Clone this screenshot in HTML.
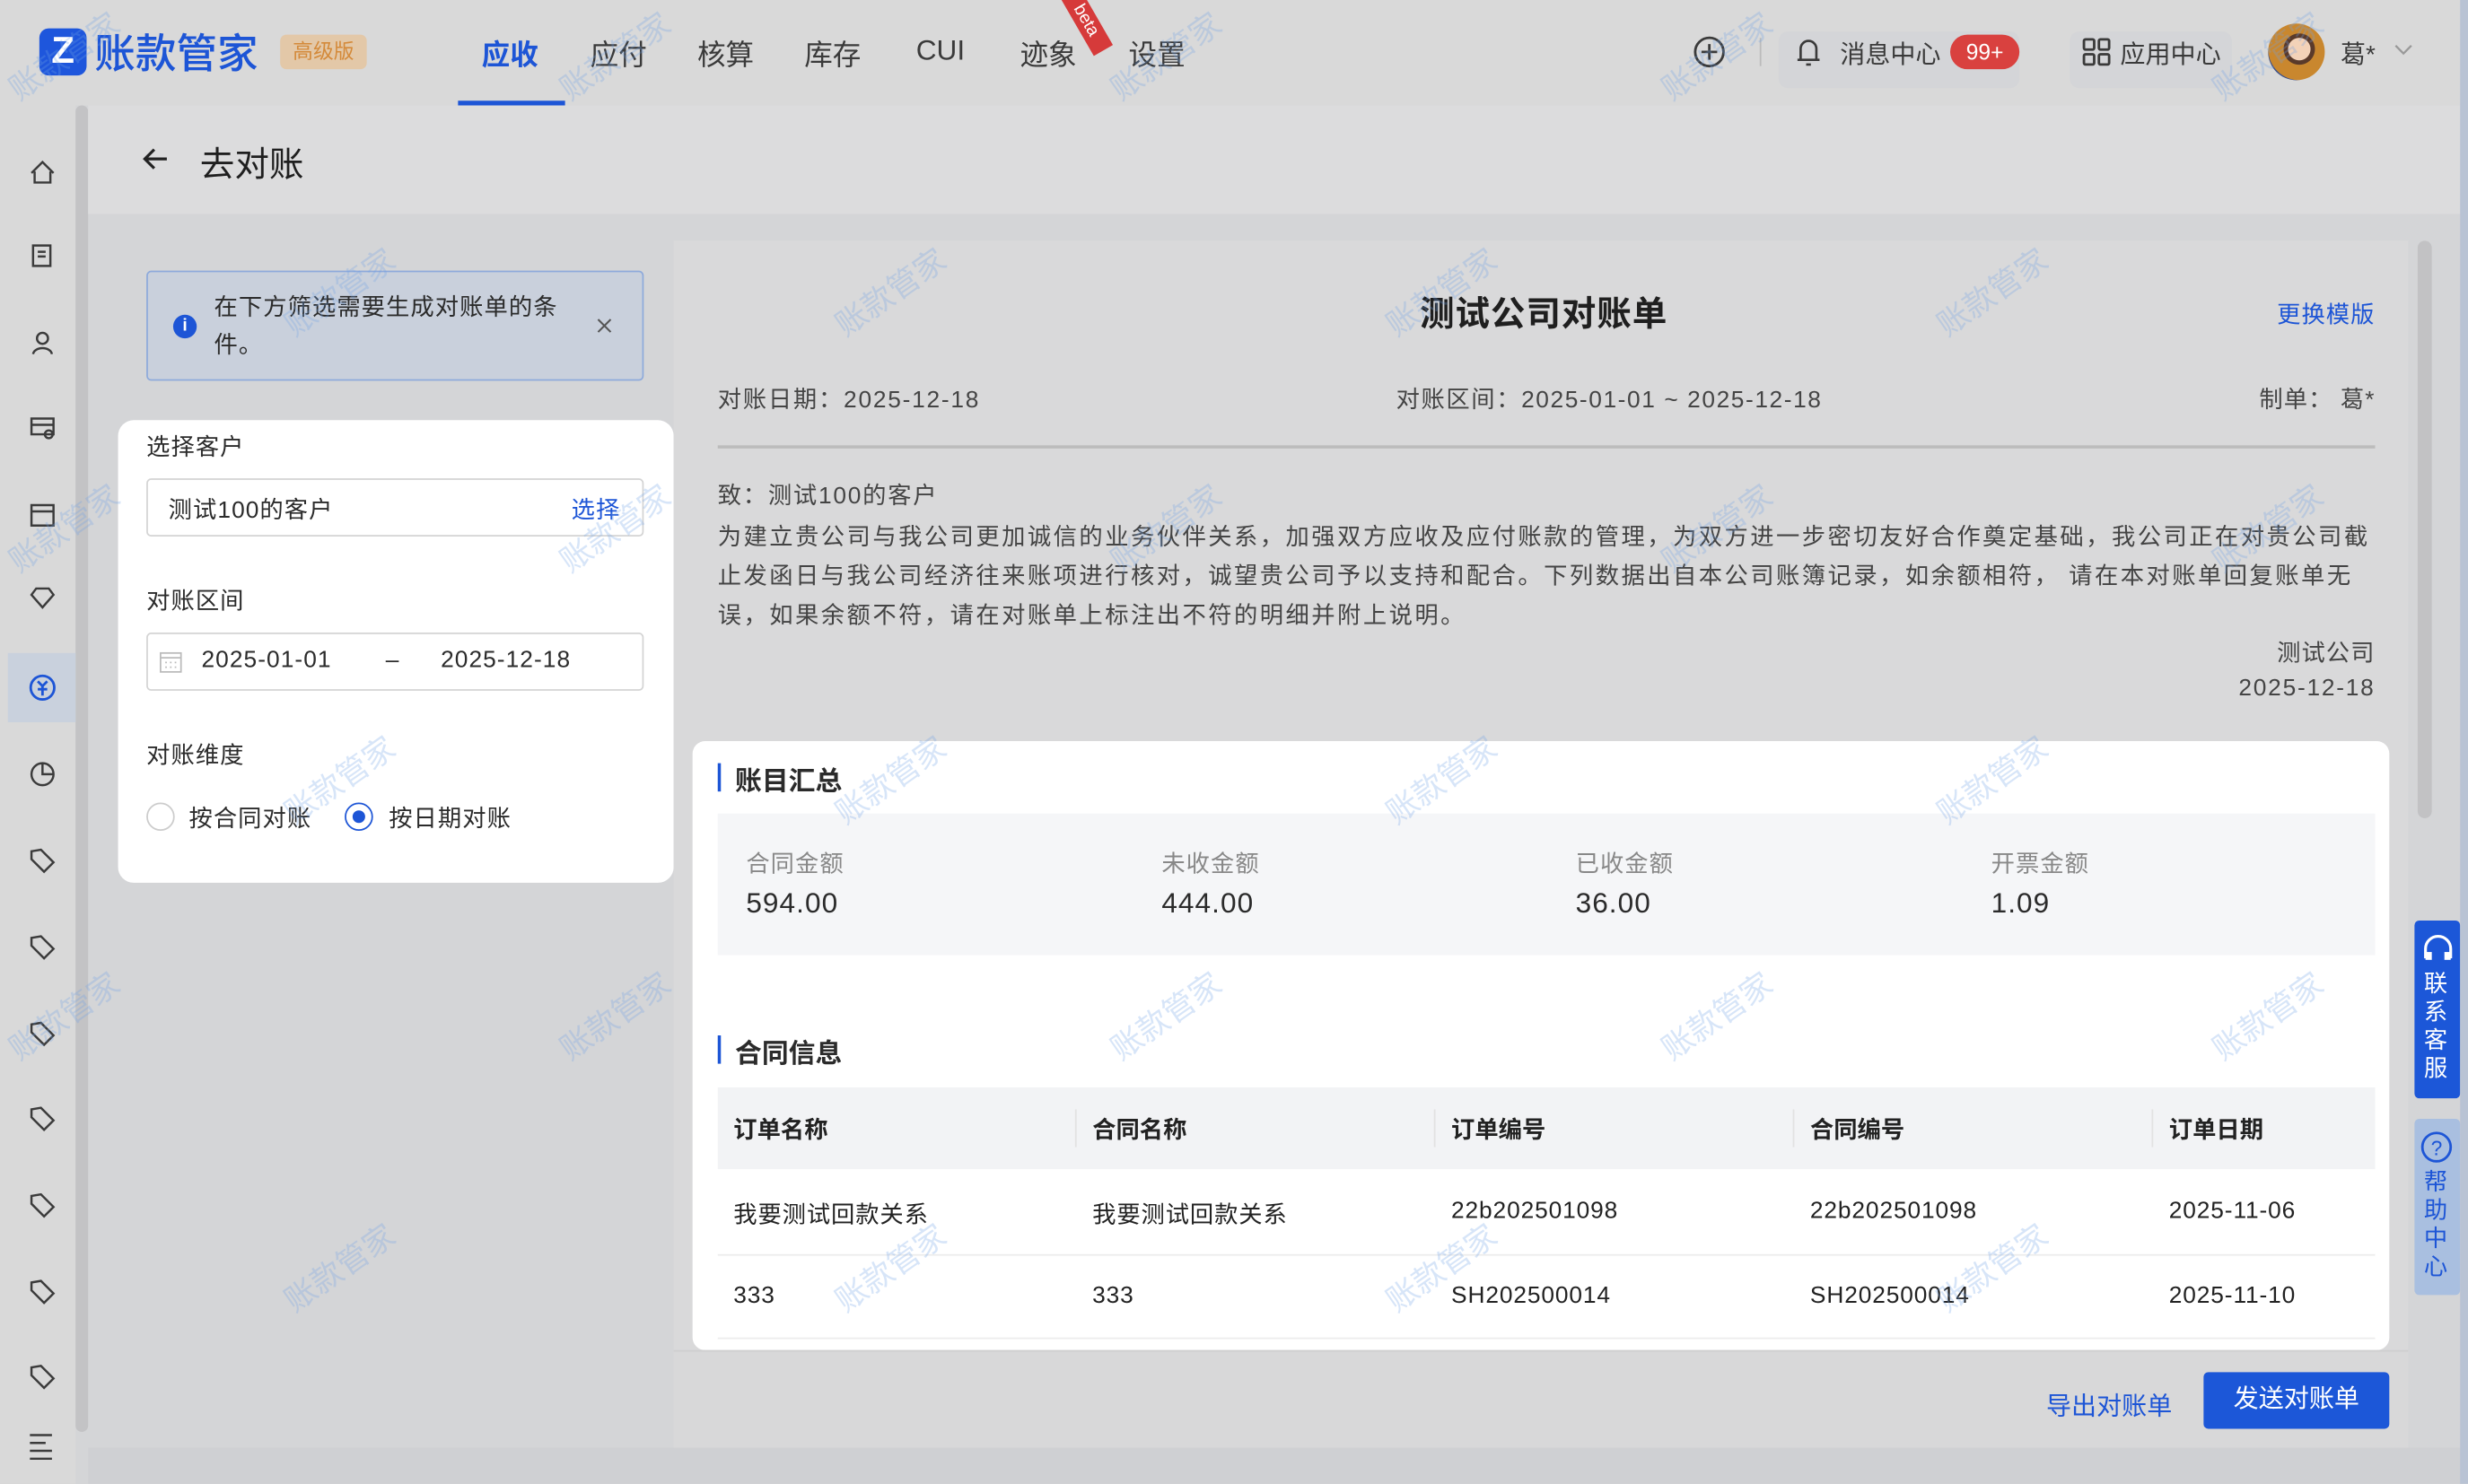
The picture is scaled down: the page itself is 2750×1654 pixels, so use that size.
<!DOCTYPE html>
<html><head><meta charset="utf-8">
<style>
*{margin:0;padding:0;box-sizing:border-box}
html,body{width:2750px;height:1654px;overflow:hidden;background:#d6d6d8}
body{font-family:"Liberation Sans","Noto Sans CJK SC",sans-serif;color:#2b2b2b}
#w{position:absolute;left:0;top:0;width:1568px;height:943px;transform:scale(1.75383);transform-origin:0 0;background:#d4d5d7;overflow:hidden}
.a{position:absolute;white-space:nowrap}
.t15{font-size:15px}
.ls{letter-spacing:0.6px}
.nav{left:0;top:0;width:1568px;height:67px;background:#d9d9d9}
.ni{font-size:18px;color:#3a3a3a;top:21px}
.side{left:0;top:67px;width:48px;height:876px;background:#d9d9d9}
svg{overflow:visible}
.wm{position:absolute;color:rgba(110,160,230,.28);font-size:20px;transform:rotate(-35deg);white-space:nowrap}
.th{font-size:15px;font-weight:bold;color:#222}
.td{font-size:15px;color:#222;letter-spacing:0.5px}
.r{text-align:right}
</style></head><body><div id="w">

<div class="a nav"></div>
<div class="a" style="left:25px;top:18px;width:30px;height:30px;background:#1e56dc;border-radius:6px;color:#fff;font:bold 24px/30px 'Liberation Sans';text-align:center">Z</div>
<div class="a" style="left:60px;top:14px;font-size:26px;color:#1d55d6;font-weight:500">账款管家</div>
<div class="a" style="left:178px;top:22px;width:55px;height:22px;background:#e3c8a8;border-radius:4px;color:#d48a3a;font-size:13px;line-height:22px;text-align:center">高级版</div>
<div class="a ni" style="left:306px;color:#1d55d6;font-weight:bold">应收</div>
<div class="a" style="left:291px;top:64px;width:68px;height:3px;background:#1d55d6"></div>
<div class="a ni" style="left:375px">应付</div>
<div class="a ni" style="left:443px">核算</div>
<div class="a ni" style="left:511px">库存</div>
<div class="a ni" style="left:582px;top:22px">CUI</div>
<div class="a ni" style="left:648px">迹象</div>
<div class="a ni" style="left:717px">设置</div>
<div class="a" style="left:668px;top:6px;width:44px;height:14px;background:#d63a3a;color:#fff;font-size:11px;line-height:14px;text-align:center;transform:rotate(60deg)">beta</div>
<svg class="a" style="left:1076px;top:23px" width="20" height="20"><circle cx="10" cy="10" r="9" fill="none" stroke="#3a3a3a" stroke-width="1.6"/><path d="M10 5v10M5 10h10" stroke="#3a3a3a" stroke-width="1.6"/></svg>
<div class="a" style="left:1118px;top:24px;width:1px;height:18px;background:#bbb"></div>
<div class="a" style="left:1130px;top:20px;width:153px;height:36px;background:#d4d5d8;border-radius:6px"></div>
<svg class="a" style="left:1141px;top:23px" width="16" height="20"><path d="M3 15V8a5 5 0 0 1 10 0v7M1 15h14M6.5 18h3" fill="none" stroke="#3a3a3a" stroke-width="1.5"/></svg>
<div class="a" style="left:1169px;top:21px;font-size:16px;color:#3a3a3a">消息中心</div>
<div class="a" style="left:1239px;top:22px;width:44px;height:22px;background:#d9413f;border-radius:11px;color:#fff;font-size:14px;line-height:22px;text-align:center">99+</div>
<div class="a" style="left:1315px;top:20px;width:103px;height:36px;background:#d4d5d8;border-radius:6px"></div>
<svg class="a" style="left:1323px;top:24px" width="18" height="18"><g fill="none" stroke="#3a3a3a" stroke-width="1.6"><rect x="1" y="1" width="6.5" height="6.5" rx="1"/><rect x="10.5" y="1" width="6.5" height="6.5" rx="1"/><rect x="1" y="10.5" width="6.5" height="6.5" rx="1"/><rect x="10.5" y="10.5" width="6.5" height="6.5" rx="1"/></g></svg>
<div class="a" style="left:1347px;top:21px;font-size:16px;color:#3a3a3a">应用中心</div>
<div class="a" style="left:1441px;top:15px;width:36px;height:36px;border-radius:50%;background:radial-gradient(circle at 55% 45%,#f3d2b8 0 25%,#5a3a2a 26% 35%,#c9872e 36% 70%,#3a4f8a 71%)"></div>
<div class="a" style="left:1487px;top:21px;font-size:16px;color:#3a3a3a">葛*</div>
<svg class="a" style="left:1521px;top:28px" width="12" height="8"><path d="M1 1l5 5 5-5" fill="none" stroke="#999" stroke-width="1.3"/></svg>

<div class="a side"></div>
<div class="a" style="left:48px;top:67px;width:8px;height:843px;background:#c3c3c5;border-radius:4px"></div>
<div class="a" style="left:5px;top:415px;width:43px;height:44px;background:#c9d1dd"></div>
<svg class="a" style="left:0;top:0" width="56" height="943"><g fill="none" stroke="#3b3b3b" stroke-width="1.4">
<path d="M20 110l7-7 7 7M22 109v7h10v-7"/>
<path d="M21 156h11v13h-11zM24 160h5M24 163h5"/>
<circle cx="27" cy="215" r="3.5"/><path d="M21 225c1-5 11-5 12 0"/>
<path d="M20 266h14v10h-14zM20 270h14"/><circle cx="31" cy="276" r="2.5"/>
<path d="M20 321h14v13h-14zM20 325h14"/>
<path d="M20 378l3-4h8l3 4-7 8z"/>
<circle cx="27" cy="492" r="7"/><path d="M27 485v7h7"/>
<path d="M20 541l6-1 8 8-6 6-8-8z"/><path d="M20 596l6-1 8 8-6 6-8-8z"/><path d="M20 651l6-1 8 8-6 6-8-8z"/><path d="M20 705l6-1 8 8-6 6-8-8z"/><path d="M20 760l6-1 8 8-6 6-8-8z"/><path d="M20 815l6-1 8 8-6 6-8-8z"/><path d="M20 869l6-1 8 8-6 6-8-8z"/>
<path d="M19 912h14M19 917h10M19 922h14M19 927h14"/>
</g><g fill="none" stroke="#1d55d6" stroke-width="1.6"><circle cx="27" cy="437" r="7.5"/><path d="M24 433l3 3 3-3M27 436v6M24 438h6"/></g></svg>

<div class="a" style="left:56px;top:67px;width:1512px;height:69px;background:#dcdcdd"></div>
<svg class="a" style="left:90px;top:93px" width="18" height="16"><path d="M16 8H2M8 2L2 8l6 6" fill="none" stroke="#222" stroke-width="1.8"/></svg>
<div class="a" style="left:127px;top:87px;font-size:22px;color:#1f1f1f">去对账</div>

<div class="a" style="left:93px;top:172px;width:316px;height:70px;background:#c9d0dc;border:1px solid #8eaadb;border-radius:3px"></div>
<div class="a" style="left:110px;top:200px;width:15px;height:15px;border-radius:50%;background:#1d55d6;color:#fff;font-size:11px;line-height:15px;text-align:center;font-weight:bold">i</div>
<div class="a t15 ls" style="left:136px;top:184px;line-height:24px;color:#2b2b2b;white-space:normal;width:235px">在下方筛选需要生成对账单的条件。</div>
<svg class="a" style="left:379px;top:202px" width="10" height="10"><path d="M1 1l8 8M9 1l-8 8" stroke="#555" stroke-width="1.2"/></svg>

<div class="a" style="left:75px;top:267px;width:353px;height:294px;background:#fff;border-radius:10px"></div>
<div class="a t15 ls" style="left:93px;top:273px">选择客户</div>
<div class="a" style="left:93px;top:304px;width:316px;height:37px;border:1px solid #d4d4d4;border-radius:3px"></div>
<div class="a t15 ls" style="left:107px;top:313px">测试100的客户</div>
<div class="a t15 ls" style="left:363px;top:313px;color:#1d55d6">选择</div>
<div class="a t15 ls" style="left:93px;top:371px">对账区间</div>
<div class="a" style="left:93px;top:402px;width:316px;height:37px;border:1px solid #d4d4d4;border-radius:3px"></div>
<svg class="a" style="left:101px;top:413px" width="15" height="15"><rect x="1" y="2" width="13" height="12" fill="none" stroke="#bbb"/><path d="M1 5h13M4 8h1M7 8h1M10 8h1M4 11h1M7 11h1M10 11h1" stroke="#bbb"/></svg>
<div class="a t15 ls" style="left:128px;top:411px">2025-01-01</div>
<div class="a t15" style="left:245px;top:411px">–</div>
<div class="a t15 ls" style="left:280px;top:411px">2025-12-18</div>
<div class="a t15 ls" style="left:93px;top:469px">对账维度</div>
<div class="a" style="left:93px;top:510px;width:18px;height:18px;border:1px solid #ccc;border-radius:50%"></div>
<div class="a t15 ls" style="left:120px;top:509px">按合同对账</div>
<div class="a" style="left:219px;top:510px;width:18px;height:18px;border:1.5px solid #1d55d6;border-radius:50%"></div>
<div class="a" style="left:224px;top:515px;width:8px;height:8px;background:#1d55d6;border-radius:50%"></div>
<div class="a t15 ls" style="left:247px;top:509px">按日期对账</div>

<div class="a" style="left:428px;top:153px;width:1102px;height:767px;background:#d9d9da"></div>
<div class="a" style="left:1536px;top:153px;width:9px;height:367px;background:#c2c2c4;border-radius:5px"></div>
<div class="a" style="left:902px;top:182px;font-size:22px;font-weight:bold;color:#1f1f1f;letter-spacing:0.5px">测试公司对账单</div>
<div class="a t15 ls r" style="left:1400px;width:109px;top:189px;color:#1d55d6">更换模版</div>
<div class="a t15" style="left:456px;top:243px;color:#444;letter-spacing:1px">对账日期：2025-12-18</div>
<div class="a t15" style="left:887px;top:243px;color:#444;letter-spacing:0.9px">对账区间：2025-01-01 ~ 2025-12-18</div>
<div class="a t15 ls r" style="left:1400px;width:109px;top:243px;color:#444">制单：&nbsp;葛*</div>
<div class="a" style="left:456px;top:283px;width:1053px;height:2px;background:#bcbcbc"></div>
<div class="a t15" style="left:456px;top:304px;color:#444;letter-spacing:1px">致：测试100的客户</div>
<div class="a t15" style="left:456px;top:329px;width:1058px;line-height:25px;color:#444;white-space:normal;letter-spacing:1.4px">为建立贵公司与我公司更加诚信的业务伙伴关系，加强双方应收及应付账款的管理，为双方进一步密切友好合作奠定基础，我公司正在对贵公司截止发函日与我公司经济往来账项进行核对，诚望贵公司予以支持和配合。下列数据出自本公司账簿记录，如余额相符， 请在本对账单回复账单无误，如果余额不符，请在对账单上标注出不符的明细并附上说明。</div>
<div class="a t15 ls r" style="left:1350px;width:159px;top:404px;color:#444">测试公司</div>
<div class="a t15 r" style="left:1350px;width:159px;top:429px;color:#444;letter-spacing:1px">2025-12-18</div>

<div class="a" style="left:440px;top:471px;width:1078px;height:387px;background:#fff;border-radius:8px"></div>
<div class="a" style="left:456px;top:485px;width:2px;height:18px;background:#1d55d6"></div>
<div class="a" style="left:467px;top:482px;font-size:17px;font-weight:bold">账目汇总</div>
<div class="a" style="left:456px;top:517px;width:1053px;height:90px;background:#f5f6f8"></div>
<div class="a t15 ls" style="left:474px;top:538px;color:#888">合同金额</div>
<div class="a t15 ls" style="left:738px;top:538px;color:#888">未收金额</div>
<div class="a t15 ls" style="left:1001px;top:538px;color:#888">已收金额</div>
<div class="a t15 ls" style="left:1265px;top:538px;color:#888">开票金额</div>
<div class="a" style="left:474px;top:564px;font-size:18px;letter-spacing:0.6px">594.00</div>
<div class="a" style="left:738px;top:564px;font-size:18px;letter-spacing:0.6px">444.00</div>
<div class="a" style="left:1001px;top:564px;font-size:18px;letter-spacing:0.6px">36.00</div>
<div class="a" style="left:1265px;top:564px;font-size:18px;letter-spacing:0.6px">1.09</div>
<div class="a" style="left:456px;top:658px;width:2px;height:18px;background:#1d55d6"></div>
<div class="a" style="left:467px;top:655px;font-size:17px;font-weight:bold">合同信息</div>
<div class="a" style="left:456px;top:691px;width:1053px;height:52px;background:#f2f3f5"></div>
<div class="a" style="left:683px;top:705px;width:1px;height:24px;background:#e2e2e2"></div>
<div class="a" style="left:911px;top:705px;width:1px;height:24px;background:#e2e2e2"></div>
<div class="a" style="left:1139px;top:705px;width:1px;height:24px;background:#e2e2e2"></div>
<div class="a" style="left:1367px;top:705px;width:1px;height:24px;background:#e2e2e2"></div>
<div class="a th" style="left:466px;top:707px">订单名称</div>
<div class="a th" style="left:694px;top:707px">合同名称</div>
<div class="a th" style="left:922px;top:707px">订单编号</div>
<div class="a th" style="left:1150px;top:707px">合同编号</div>
<div class="a th" style="left:1378px;top:707px">订单日期</div>
<div class="a td" style="left:466px;top:761px">我要测试回款关系</div>
<div class="a td" style="left:694px;top:761px">我要测试回款关系</div>
<div class="a td" style="left:922px;top:761px">22b202501098</div>
<div class="a td" style="left:1150px;top:761px">22b202501098</div>
<div class="a td" style="left:1378px;top:761px">2025-11-06</div>
<div class="a" style="left:456px;top:797px;width:1053px;height:1px;background:#ececec"></div>
<div class="a td" style="left:466px;top:815px">333</div>
<div class="a td" style="left:694px;top:815px">333</div>
<div class="a td" style="left:922px;top:815px">SH202500014</div>
<div class="a td" style="left:1150px;top:815px">SH202500014</div>
<div class="a td" style="left:1378px;top:815px">2025-11-10</div>
<div class="a" style="left:456px;top:850px;width:1053px;height:1px;background:#ececec"></div>

<div class="a" style="left:428px;top:858px;width:1102px;height:62px;background:#d8d8d9;border-top:1px solid #cfcfcf"></div>
<div class="a" style="left:1300px;top:880px;font-size:16px;color:#1d55d6">导出对账单</div>
<div class="a" style="left:1400px;top:872px;width:118px;height:36px;background:#1c57d8;border-radius:3px;color:#fff;font-size:16px;line-height:36px;text-align:center">发送对账单</div>
<div class="a" style="left:56px;top:920px;width:1512px;height:23px;background:#cfd0d3"></div>

<div class="a" style="left:1534px;top:585px;width:29px;height:113px;background:#1c57d8;border-radius:3px"></div>
<svg class="a" style="left:1539px;top:593px" width="20" height="20"><path d="M2 16V10a8 8 0 0 1 16 0v6" fill="none" stroke="#fff" stroke-width="1.8"/><rect x="2" y="12" width="4" height="5" fill="#fff"/><rect x="14" y="12" width="4" height="5" fill="#fff"/></svg>
<div class="a" style="left:1540px;top:617px;width:16px;font-size:15px;line-height:18px;color:#fff;white-space:normal">联系客服</div>
<div class="a" style="left:1534px;top:711px;width:29px;height:112px;background:#a9bfe0;border-radius:3px"></div>
<svg class="a" style="left:1538px;top:719px" width="20" height="20"><circle cx="10" cy="10" r="9" fill="none" stroke="#1d55d6" stroke-width="1.6"/><text x="10" y="15" font-size="13" text-anchor="middle" fill="#1d55d6" font-family="Liberation Sans">?</text></svg>
<div class="a" style="left:1540px;top:743px;width:16px;font-size:15px;line-height:18px;color:#1d55d6;white-space:normal">帮助中心</div>
<div class="a" style="left:1563px;top:0;width:5px;height:943px;background:#b9c3d4"></div>

<div class="wm" style="left:0;top:20px">账款管家</div><div class="wm" style="left:350px;top:20px">账款管家</div><div class="wm" style="left:700px;top:20px">账款管家</div><div class="wm" style="left:1050px;top:20px">账款管家</div><div class="wm" style="left:1400px;top:20px">账款管家</div>
<div class="wm" style="left:175px;top:170px">账款管家</div><div class="wm" style="left:525px;top:170px">账款管家</div><div class="wm" style="left:875px;top:170px">账款管家</div><div class="wm" style="left:1225px;top:170px">账款管家</div>
<div class="wm" style="left:0;top:320px">账款管家</div><div class="wm" style="left:350px;top:320px">账款管家</div><div class="wm" style="left:700px;top:320px">账款管家</div><div class="wm" style="left:1050px;top:320px">账款管家</div><div class="wm" style="left:1400px;top:320px">账款管家</div>
<div class="wm" style="left:175px;top:480px">账款管家</div><div class="wm" style="left:525px;top:480px">账款管家</div><div class="wm" style="left:875px;top:480px">账款管家</div><div class="wm" style="left:1225px;top:480px">账款管家</div>
<div class="wm" style="left:0;top:630px">账款管家</div><div class="wm" style="left:350px;top:630px">账款管家</div><div class="wm" style="left:700px;top:630px">账款管家</div><div class="wm" style="left:1050px;top:630px">账款管家</div><div class="wm" style="left:1400px;top:630px">账款管家</div>
<div class="wm" style="left:175px;top:790px">账款管家</div><div class="wm" style="left:525px;top:790px">账款管家</div><div class="wm" style="left:875px;top:790px">账款管家</div><div class="wm" style="left:1225px;top:790px">账款管家</div>
</div></body></html>
